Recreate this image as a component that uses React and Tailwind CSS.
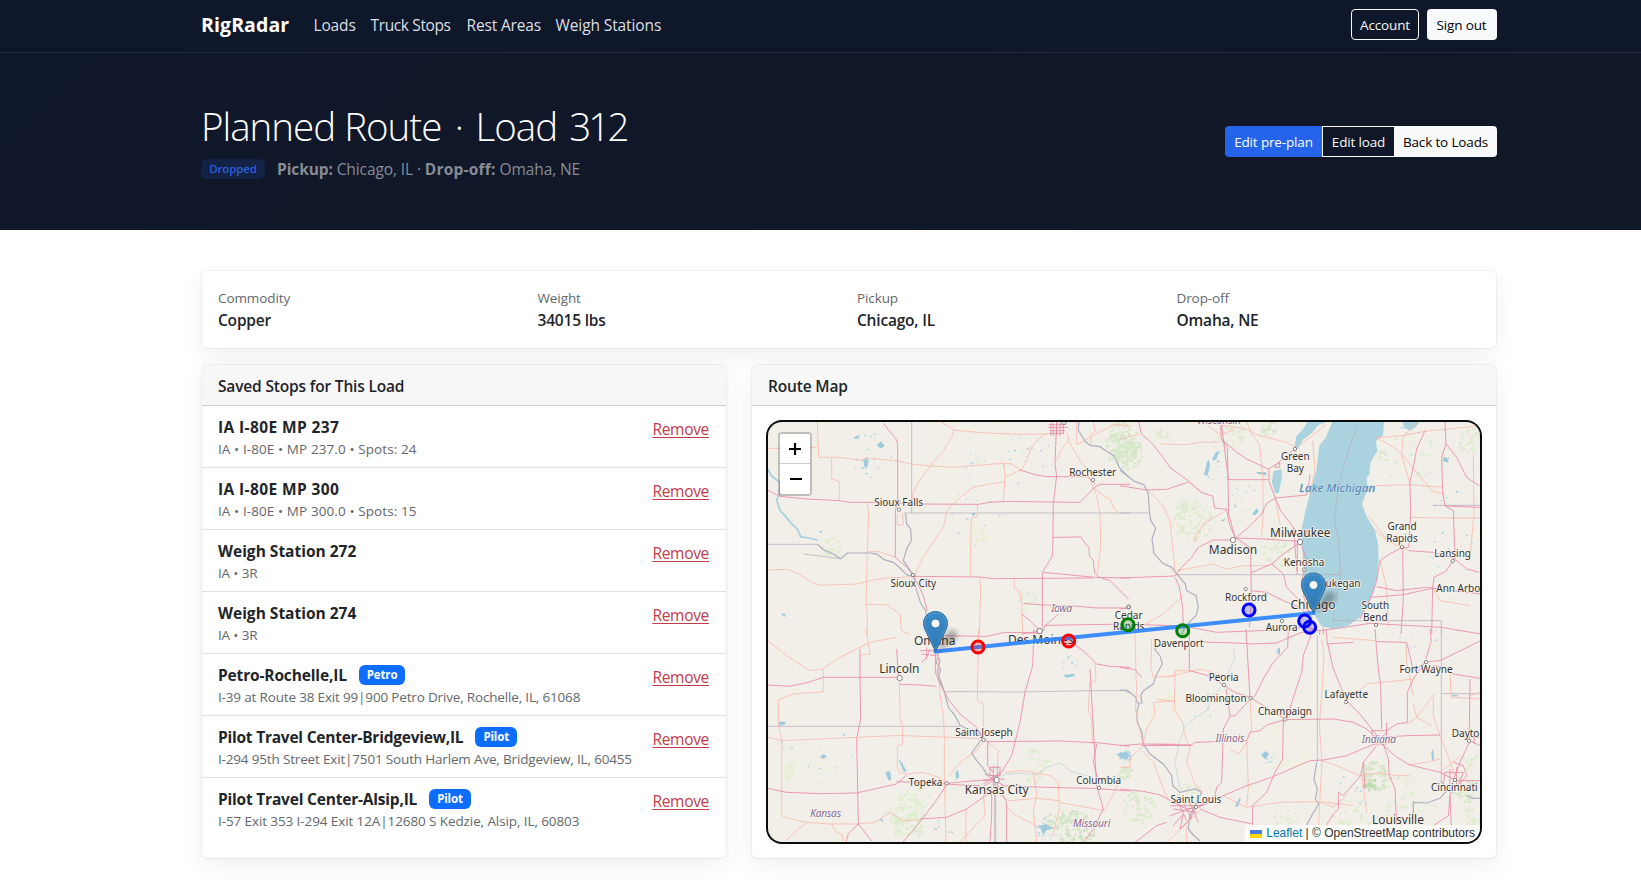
const navLinks = [
  { label: 'Loads', cls: 'w-[57px]' },
  { label: 'Truck Stops', cls: 'w-[96px] tracking-[-0.37px]' },
  { label: 'Rest Areas', cls: 'w-[89px]' },
  { label: 'Weigh Stations', cls: 'w-[120px] tracking-[-0.1px]' },
];

const facts = [
  ['Commodity', 'Copper'],
  ['Weight', '34015 lbs'],
  ['Pickup', 'Chicago, IL'],
  ['Drop-off', 'Omaha, NE'],
];

const stops = [
  { name: 'IA I-80E MP 237', detail: 'IA • I-80E • MP 237.0 • Spots: 24', nameCls: 'tracking-[0.4px]', detailCls: 'tracking-[0.1px]' },
  { name: 'IA I-80E MP 300', detail: 'IA • I-80E • MP 300.0 • Spots: 15', nameCls: 'tracking-[0.4px]', detailCls: 'tracking-[0.1px]' },
  { name: 'Weigh Station 272', detail: 'IA • 3R', nameCls: 'tracking-[0px]', detailCls: '' },
  { name: 'Weigh Station 274', detail: 'IA • 3R', nameCls: 'tracking-[0px]', detailCls: '' },
  { name: 'Petro-Rochelle,IL', tag: 'Petro', detail: 'I-39 at Route 38 Exit 99|900 Petro Drive, Rochelle, IL, 61068', nameCls: 'tracking-[-0.15px]', detailCls: 'tracking-[-0.17px]' },
  { name: 'Pilot Travel Center-Bridgeview,IL', tag: 'Pilot', detail: 'I-294 95th Street Exit|7501 South Harlem Ave, Bridgeview, IL, 60455', nameCls: 'tracking-[-0.23px]', detailCls: 'tracking-[-0.17px]' },
  { name: 'Pilot Travel Center-Alsip,IL', tag: 'Pilot', detail: 'I-57 Exit 353 I-294 Exit 12A|12680 S Kedzie, Alsip, IL, 60803', nameCls: 'tracking-[-0.2px]', detailCls: 'tracking-[-0.1px]' },
];

/* Each map sheet has its own origin; its units are thirds of a pixel. */
const sheets = [
  {
    origin: [760, 415],
    rivers: [
      'M24 165 L34 185 L48 196 L60 205 L58 240 L50 258 L60 290 L75 305 L95 330 L112 345 L122 368 L146 372 L172 378',
    ],
    lakes: ['M312 138l10 -8l4 12l-6 22l-8 -8z', 'M350 92l14 -10l10 14l-12 8z', 'M283 68l16 -4l-4 10l-12 0z', 'M62 598l12 2l4 8l-8 -2z', 'M175 355l12 -8l-3 10z', 'M633 299l12 -3l-3 12z'],
    grey: [
      'M956 24 L955 48 L975 82 L990 94 L1020 98 L1040 112 L1062 126 L1078 160 L1106 190',
      'M172 390 L190 407 L220 420 L242 434 L262 417 L330 417 L352 421 L372 437 L400 445 L420 462 L440 482 L460 488',
      'M436 297 L440 330 L452 345 L454 380 L440 405 L430 440 L444 460 L460 484 L470 530 L482 568 L497 590 L500 610',
    ],
    borders: ['M455 24 V297', 'M433 297 H1110', 'M24 391 H172', 'M130 420 L240 434'],
    roads: [
      'M370 28 L408 75 L413 90 V262 L406 290 V430 L440 460 L462 486 L490 545 L502 590',
      'M24 229 L60 247 L140 255 L238 260 L270 265 H395 L450 270 L655 271 L690 265 L740 262 L860 264 L960 265 L985 240 L1000 222 L1020 211 H1110',
      'M890 24 L885 150 L890 185 L880 270 L878 425 L847 475 V640',
      'M863 40 L925 40 M866 32 L918 32 M870 50 L915 50 M868 58 L912 58 M873 26 V66 M880 26 V66 M890 26 V66 M900 26 V66 M910 26 V60',
      'M780 168 L825 182 L860 188 H985 L1005 211',
      'M850 475 L1005 490 L1110 492', 'M460 487 L660 489 L700 494 L1000 492',
      'M878 370 L962 369 L975 388 L987 400 L988 425 L1000 440 L1004 478 L1018 490 L1050 500 L1075 525 L1106 556',
      'M790 568 L850 573 L930 575 L1010 582 L1100 582', 'M785 660 L850 650 L855 634 L1110 630',
      'M785 600 L810 620 L840 650', 'M850 640 L896 600',
    ],
    minor: [
      'M172 24 L176 130 H235 L300 138 L322 131 L335 134 L410 140 L455 150 L510 156 L590 160 L640 155 L730 148 L755 150 L785 170',
      'M24 103 H60 M150 101 H172', 'M215 132 V194 L238 202 V260',
      'M545 24 L583 48 L575 70 L550 110 L512 155 L475 205 L458 240 V268',
      'M578 48 L630 53 L700 58 L790 61 L865 60', 'M860 58 L835 75 L815 98 L800 140 L785 168 L735 190 L730 262',
      'M732 204 L690 210 L640 220 L600 250 L562 288 L550 340 L510 400 L490 430 L470 470 L466 487',
      'M323 268 L326 300 L322 420 L318 570 L322 600 V660', 'M24 468 L85 466 L120 482 L150 503 L180 514 L290 510 L340 498 L380 492 L460 488',
      'M318 571 L380 572 L420 600 L424 650 L450 662', 'M652 272 V308 L634 312 L632 410 V489', 'M660 492 L662 530 L658 660',
      'M763 492 V525 L778 530 L785 568 L786 600 L788 660', 'M325 413 L358 413 L406 430',
      'M920 58 L928 84 L960 140 L975 158 L985 188 L1010 245 L1020 300 L1022 400 L1012 480', 'M925 80 L905 105 L890 140',
      'M412 300 V334 L430 332 L428 296', 'M1000 220 L1030 245 L1050 255 L1062 285 L1078 296',
      'M1000 24 L1006 52 L992 60 L994 90', 'M1110 36 L1060 32 L950 92 V24', 'M725 140 L732 150 L735 190',
    ],
    greens: [[210, 400, 30, 30, '#e1ecc8'], [1075, 100, 48, 90, '#d4e6c6'], [640, 360, 40, 24, '#eaf0cf'], [540, 200, 75, 40, '#edf1d9'], [700, 90, 90, 30, '#edf1d9'], [800, 560, 30, 16, '#dcebca'], [1085, 55, 40, 45, '#d4e6c6']],
    ponds: [[330, 120, 70, 16], [800, 140, 80, 16], [660, 300, 100, 14], [620, 170, 60, 10]],
    towns: [[417, 287, 5], [999, 198, 5], [459, 483, 5], [839, 651, 8], [912, 24, 7], [1106, 579, 6]],
    labels: [['Sioux Falls', 416, 276], ['Rochester', 998, 185], ['Sioux City', 460, 519]],
    states: [['Iowa', 905, 593, 63]],
  },
  {
    origin: [1120, 415],
    water: [
      'M636 24 L792 24 L789 64 L768 82 L772 110 L752 145 L748 182 L740 190 L743 225 L726 270 L742 312 L765 348 L774 390 L776 440 L770 500 L752 556 L720 610 L684 635 L640 646 L604 636 L582 600 L572 570 L552 500 L547 400 L544 350 L552 310 L570 235 L590 165 L598 95 L618 70 Z',
      'M524 98 L528 68 L550 44 L562 24 L620 24 L596 32 L575 58 L548 78 L534 104 Z',
      'M460 172 L484 166 L486 190 L476 238 L464 236 L456 205 Z',
      'M850 24 L898 24 L888 38 L872 50 L852 42 Z',
    ],
    lakes: ['M252 182l8 -34l6 -12l4 16l-8 34z', 'M275 140l12 -25l12 -4l-10 24z', 'M396 300l16 -18l4 12l-12 10z', 'M970 128l12 4l4 14l-16 -4z', 'M408 174l30 0l2 10l-26 -4z', 'M302 320l16 -8l-6 10z'],
    rivers: [],
    grey: ['M0 168 L20 184 L45 203 L72 212 L85 240 L88 290 L92 320 L107 342 L96 375 L102 418 L128 448 L155 460 L172 482 L196 510 L200 530 L228 545 L235 580 L228 605 L210 622 L192 645 L185 662'],
    borders: ['M0 297 H85', 'M168 482 H662 L656 380 L644 318 L655 210 L690 95 L715 28', 'M662 484 L638 620 H964 V660', 'M938 274 H1082'],
    roads: [
      'M56 24 L65 60 L100 92 L125 125 L150 160 L185 186 L210 204 L245 236 L278 246 L284 282 L320 286 L328 330 L345 370 L392 402 L394 560 L388 640',
      'M302 34 L304 75 L322 100 L324 196 L326 300 L345 370', 'M323 197 L446 197', 'M0 215 L80 228 L140 226 L206 204',
      'M304 75 L350 115 L380 135 L445 165 L470 150 L524 105', 'M446 165 L448 205 L465 250 L482 290 L520 340 L540 380 L560 440 L545 500 L552 550 L570 600',
      'M346 372 L430 375 L540 382', 'M345 375 L385 340 L425 300 L440 268 L466 252 L560 243 L568 200 L570 180',
      'M345 378 L280 378 L235 400 L215 430 L185 460 L165 486 L0 492', 'M166 490 L178 520 L188 580 L190 640',
      'M394 476 L455 450 L490 420 L540 386', 'M455 450 L490 480 L500 520 L540 560 L570 600', 'M394 530 L440 535 L490 560 L540 580 L570 610',
      'M0 585 L30 582 M0 630 L190 636 L290 655 L420 650 L560 640 L600 650 L662 642 L750 628 L964 640 L1082 660',
      'M975 24 L978 90 L965 130 L968 235 L975 276 L1000 290 L1005 430 L980 470 L942 490 L938 522 L935 660',
      'M915 50 L890 105 L882 150 L870 205 L872 300 L866 400 L844 402 L812 418 L780 440 L770 500 L755 545 L720 615',
      'M866 410 L940 415 L1000 432 L1040 465 L1078 475', 'M978 90 L1010 130 L1040 190 L1078 215', 'M770 518 L830 530 L920 520 L1000 530 L1082 540',
      'M848 400 L850 560 L843 660', 'M975 276 L1078 280', 'M754 550 L850 542 L942 522', 'M600 650 L598 662 M610 640 V662',
      'M520 340 L532 480 M532 382 V470 M465 155 L480 145 L478 160 L465 160 Z', 'M325 196 L305 34',
    ],
    minor: [
      'M60 60 L0 75', 'M122 90 L200 92 L240 85 L302 84', 'M85 230 L128 275 L150 320 L158 400 L166 480', 'M245 235 L205 205',
      'M304 34 L380 45 L410 62 L500 85 L524 98', 'M380 24 L395 60 L418 90 L428 180 L430 290 L425 370', 'M530 100 L580 62 L620 30',
      'M570 240 L585 165 L578 80', 'M466 250 L480 330', 'M325 285 L250 330 L220 385', 'M172 470 L280 450 L320 465 L370 455 L450 455',
      'M736 230 L768 215 L870 212 L968 220', 'M765 348 L800 380 L866 410', 'M768 70 L820 100 L850 125 L890 175 L935 230 L975 240', 'M768 72 L845 65 L915 52 L1080 35',
      'M872 310 L975 312 H1082', 'M745 305 L780 350 L800 376 L830 380', 'M1060 120 L1062 300 L1050 430', 'M940 522 L960 560 L1050 575',
      'M870 210 L845 120 L850 70 L890 24', 'M780 440 L800 520 L805 640', 'M190 545 L130 600 L60 640', 'M250 24 L300 62 L340 48',
    ],
    greens: [[20, 120, 45, 75, '#d4e6c6'], [215, 320, 60, 90, '#dceacb'], [120, 60, 20, 18, '#dcebca'], [440, 40, 25, 24, '#d4e6c6'], [330, 60, 40, 28, '#dcebca'], [1050, 80, 40, 45, '#dceacb'], [460, 410, 50, 36, '#dcebca'], [775, 120, 30, 14, '#d9e8c6'], [880, 140, 90, 24, '#dcebca'], [170, 280, 25, 16, '#dcebca']],
    ponds: [[300, 150, 60, 14], [380, 260, 50, 12], [870, 40, 30, 14], [960, 200, 80, 10], [1000, 400, 80, 10]],
    towns: [[525, 105, 5], [339, 378, 8], [540, 384, 8], [552, 467, 5], [377, 525, 5], [846, 399, 5], [998, 441, 5], [486, 621, 5], [768, 633, 5], [26, 579, 5]],
    labels: [
      ['Green', 526, 139], ['Bay', 526, 174], ['Milwaukee', 541, 368, 36], ['Madison', 339, 419, 36], ['Kenosha', 552, 455], ['Waukegan', 647, 520], ['Rockford', 378, 560],
      ['Chicago', 579, 584, 36], ['Aurora', 485, 652], ['Grand', 846, 349], ['Rapids', 846, 384], ['Lansing', 998, 428], ['Ann Arbor', 1021, 534], ['South', 766, 585], ['Bend', 766, 620], ['Cedar', 26, 614], ['Rapids', 26, 648],
    ],
    states: [['Wisconsin', 297, 31, 132]],
    lakeLabel: ['Lake Michigan', 652, 235],
  },
  {
    origin: [760, 630],
    rivers: [],
    lakes: ['M376 430l14 -4l4 24l-8 6z', 'M55 278l20 0l2 8l-18 4z', 'M180 384l10 -8l10 4l-8 10z', 'M908 138l34 -4l2 8l-24 4z', 'M586 430l8 -8l4 22l-10 8z', 'M838 590l20 -4l22 12l-20 6l-10 14z', 'M1070 376l30 -8l8 12l-26 8z', 'M358 566l12 8l-4 6z', 'M414 388l10 10l16 28l-8 4z'],
    grey: [
      'M530 70 L540 95 L532 130 L545 165 L555 195 L565 235 L585 260 L600 288 L625 302 L655 305 L665 330 L635 372 L650 395 L668 415 L680 436 L710 444',
      'M536 80 L528 100 L542 120 L535 150 L548 172',
    ],
    faint: ['M710 444 L740 436 L780 432 L830 438 L860 415 L900 402 L935 428 L980 440'],
    borders: ['M24 292 H600', 'M555 188 H640 L780 189 L1000 185 H1095 L1108 192', 'M704 455 V640', 'M707 455 V640'],
    roads: [
      'M24 168 L90 172 L145 160 L190 145 H410', 'M420 166 L480 168 L530 172', 'M415 145 L410 60 M480 65 H530 M500 55 V90 M485 100 L500 85 L510 60',
      'M526 70 V130 L540 165 L565 210 L600 255 L650 295 L672 330 L683 338 L683 410 L700 430', 'M822 0 L818 110 L795 190 L780 280 L755 380 L725 430 L705 450',
      'M24 478 L80 490 L180 494 L290 492 L410 465 L440 438', 'M410 458 L550 464 L650 455 L705 450 L730 470 L860 475 L1000 478 L1110 486',
      'M558 470 L525 520 L470 590 L428 640', 'M560 465 L600 468 L660 470', 'M668 455 L735 450 M675 435 L730 470 M690 415 H720 V440 H690 Z M700 410 V475 M712 410 V475 M670 465 L720 430 M672 470 L700 455',
      'M695 470 V560 L690 638', 'M715 470 L740 520 L740 638', 'M300 60 V150 L302 270 L290 330 L295 585 L335 636', 'M295 585 L265 615 L258 638', 'M680 338 L800 337 L900 336 L1020 342 L1108 352',
      'M990 120 L1010 470 L1030 540 L1000 600 L975 636', 'M480 570 L560 565 L620 540 L690 490', 'M935 40 L975 70 L1010 105 L1050 112 L1110 115',
      'M1010 345 L1000 400 L1020 478', 'M485 75 L530 80 M530 20 L680 22 L735 10 L840 12',
    ],
    minor: [
      'M24 35 L80 80 L150 125 L190 120 L240 85 L330 40 L410 25', 'M190 120 V188 L100 195 L55 212 L55 290 L65 335 V560 L85 568 L140 580 L210 585 L295 585 L345 580 L390 550 L430 575 L480 572',
      'M318 0 L330 75 L300 78', 'M24 325 L65 335 L180 330 L290 325 L400 320 L425 320 L552 324 L672 330', 'M418 145 L420 270 L428 290 V345 L412 350 V415 L420 430 L440 435',
      'M535 70 L540 200 L550 260 L553 320 V440 L558 640', 'M656 0 L652 215 L670 225 V330', 'M568 440 L600 400 L650 365 L670 335', 'M685 340 L715 365 L712 420',
      'M440 435 L490 430 L535 445 L560 462', 'M735 430 L790 425 L870 440 L895 460 L898 540 L885 590 L878 620', 'M820 430 L830 500 L820 545 L830 638', 'M898 520 L1035 545 L1072 470',
      'M140 580 L110 605 L75 636', 'M215 585 L230 610 L248 618 V636', 'M618 540 V638', 'M670 490 L675 560 L600 638', 'M735 530 L770 560 L830 590', 'M1005 100 L1008 155 L990 160 L985 240 L995 270 L998 345', 'M720 500 L750 515 L830 508 L898 515',
    ],
    greens: [[460, 525, 50, 70, '#dbeecb'], [435, 590, 45, 50, '#d8edc9'], [940, 605, 60, 90, '#cde2be'], [880, 570, 35, 34, '#d4e6c6'], [90, 430, 25, 18, '#e1efcb'], [810, 410, 50, 26, '#dcebca'], [1090, 430, 20, 24, '#d4e6c4'], [190, 420, 60, 24, '#e6f0d2'], [400, 560, 30, 20, '#dcebca']],
    ponds: [[920, 95, 30, 8], [1090, 380, 20, 20], [860, 600, 34, 22], [210, 380, 80, 8], [550, 600, 40, 10], [75, 350, 20, 5]],
    towns: [[419, 147, 8], [671, 333, 5], [560, 463, 5], [710, 453, 8], [1017, 477, 5], [839, 6, 8]],
    labels: [['Omaha', 524, 49, 36], ['Des Moines', 842, 46, 36], ['Lincoln', 418, 132, 36], ['Saint Joseph', 672, 321], ['Topeka', 497, 472], ['Kansas City', 710, 495, 36], ['Columbia', 1016, 466]],
    states: [['Kansas', 197, 563, 93], ['Missouri', 995, 595, 112]],
  },
  {
    origin: [1120, 630],
    rivers: [],
    faint: ['M340 60 L345 90 L330 120 L310 160 L292 190', 'M285 190 L260 245 L225 268 L195 290 L178 340 L165 400 L180 480'],
    lakes: ['M345 530l14 -24l4 4l-10 24z', 'M0 370l28 2l-6 20l-22 -6z', 'M425 380l10 -14l12 8l-10 18z', 'M934 370l6 -10l2 30l-6 6z', 'M996 198l18 0l0 4l-18 0z', 'M472 60l8 -4l0 20l-8 0z'],
    grey: [
      'M108 46 L105 62 L120 80 L127 105 L108 140 L100 165 L70 185 L62 200 L66 222 L52 222 L48 205 L22 184 L0 183',
      'M58 222 L50 250 L52 280 L66 310 L70 345 L90 375 L130 405 L155 440 L158 470 L180 490 L225 480 L245 490 L232 515 L210 560 L205 600 L220 618 L240 636',
      'M590 400 L582 450 L592 480 L586 510 L596 525 L575 560 L560 588',
      'M880 560 V520 L920 522 L960 508 L980 485 L962 455', 'M1040 500 L1060 508 L1080 508',
    ],
    borders: ['M592 20 V400', 'M964 0 V455', 'M964 194 H1082'],
    roads: [
      'M0 115 L45 122 L65 145 M208 0 V125 L265 140 L312 168', 'M208 38 L345 42 L400 45 L470 42 L540 12 L590 0', 'M378 0 L390 205', 'M505 0 L503 55 L460 100 L430 150 L405 200 L390 212 L345 260 L330 262 L310 300 L305 460 L290 475 L285 500 L240 530',
      'M580 0 L550 80 L545 130 L525 190 L500 270', 'M312 170 L345 190 L390 205 L430 230 L495 270', 'M318 180 L330 260', 'M382 330 L390 310 L420 305 L440 288 L495 272 L640 270 L700 280 L740 300 L775 330',
      'M490 272 L488 390 L465 430 L440 490 L398 530 V640', 'M0 350 L65 345 L215 348 L225 340 L380 335', 'M65 350 L215 349',
      'M0 480 L70 487 L120 498 L160 520 L200 540 L235 535 L310 500 L380 470 L455 445 L500 425 L570 395 L610 393 L680 380 L775 340', 'M240 540 L300 565 L398 585', 'M228 535 L210 570 L180 600 L190 555 L160 590 M150 530 H240 M160 540 L230 550 M175 520 L200 575 M190 520 L215 570 M210 520 L235 580 M150 560 L250 525 M140 580 L110 590 L45 640',
      'M618 0 L622 40 L640 120 L680 215 L720 255 L755 300 L780 330', 'M765 0 L768 40 L775 120 L782 170 L785 300', 'M800 280 V310 L780 330 M755 305 H800 V345 H760 Z', 'M785 325 L860 320 L960 318', 'M800 305 L830 285 L862 280 V190 L880 150 L915 100',
      'M930 0 L934 35 L918 90 M918 100 L880 125 L860 40 L768 38', 'M920 98 L960 95 L1080 36', 'M938 110 L975 115 L1000 135 L1080 148', 'M785 345 L830 385 L870 408 L960 430 L1000 450', 'M770 350 L730 400 L722 440 L670 500 L655 490 L655 540 L640 555 L620 588', 'M790 345 L805 390 L808 440 L825 480 L830 588',
      'M1050 150 L1048 300 L1050 335 L1020 400 L1005 440 L990 500 L985 560 L940 590', 'M1050 335 L1080 350 M1055 325 L1078 325 M1062 310 V345', 'M975 430 H1030 L1015 470 H970 Z M990 420 V480 M1010 415 V470', 'M1005 455 L1082 455 M1000 400 L1030 410 L1040 440 L1020 465',
      'M990 500 L996 636', 'M620 45 L700 40', 'M730 400 L735 480',
    ],
    minor: [
      'M95 30 L93 120 L100 145 L163 140 L165 125 L208 125', 'M165 130 L163 240 L190 285 L192 310 L210 360 L200 400 L225 465 L245 490', 'M45 0 L48 140 L50 180 L46 240 L70 350', 'M70 350 L32 385 L30 415 L0 415',
      'M70 345 L80 300 L105 255 L100 220 L160 215 M163 345 L100 345', 'M66 365 L100 400 L130 480 L145 510', 'M605 30 L612 80 L605 200 L598 290 L606 400 L600 500 L596 588', 'M310 500 L380 535 L480 520 L600 518 L700 530', 'M380 335 L395 300 L390 200',
      'M380 330 L385 480 L380 530', 'M606 395 L650 410 L720 440 L780 432 L835 440 L870 440', 'M940 195 L940 260 L960 320 L980 370 L1005 440', 'M680 215 L740 165 L880 150', 'M865 408 L920 400 L960 390', 'M880 225 L890 265 L940 200 M890 265 L862 285 M890 265 L935 290', 'M725 440 L740 550',
      'M990 110 L993 205 L1080 210', 'M765 35 L640 25', 'M960 430 L1005 395 L1020 380', 'M330 360 L355 375 L385 335', 'M110 210 L163 218', 'M240 545 L140 640 M200 590 V640', 'M140 145 L240 120 L340 150', 'M600 520 L640 535 L680 500', 'M1050 200 L1080 190', 'M880 200 L860 100 L858 40',
    ],
    greens: [[490, 340, 85, 70, '#eef2d3'], [760, 440, 45, 65, '#d0e4c1'], [745, 465, 20, 24, '#b9d9ab'], [50, 530, 50, 70, '#d8e8c9'], [140, 225, 30, 14, '#e8efcf'], [200, 500, 40, 26, '#dcebca'], [860, 510, 80, 32, '#dcebca'], [1030, 480, 40, 26, '#d4e6c4'], [490, 575, 40, 18, '#dcebca'], [690, 560, 60, 30, '#dcebca'], [1050, 560, 30, 24, '#dcebca'], [1045, 400, 30, 14, '#dcebca']],
    ponds: [[15, 380, 18, 12], [440, 380, 22, 12], [690, 480, 50, 10], [880, 30, 80, 8], [230, 240, 60, 8]],
    towns: [[312, 168, 5], [392, 207, 5], [495, 272, 5], [678, 219, 5], [918, 99, 5], [1047, 336, 5], [1005, 453, 5], [228, 534, 5]],
    labels: [['Davenport', 176, 53], ['Peoria', 311, 156], ['Bloomington', 288, 218], ['Champaign', 495, 259], ['Lafayette', 679, 206], ['Fort Wayne', 918, 133], ['Dayton', 1046, 323], ['Cincinnati', 1003, 486], ['Saint Louis', 228, 522], ['Louisville', 834, 585, 36]],
    states: [['Illinois', 330, 339, 87], ['Indiana', 777, 341, 103]],
  },
];

const scatter = ([cx, cy, r, n], seed, size) => {
  let s = seed * 9301 + cx * 131 + cy * 17;
  const rnd = () => {
    s = (s * 16807 + 11) % 2147483647;
    return s / 2147483647;
  };
  let d = '';
  for (let i = 0; i < n; i += 1) {
    const a = rnd() * 6.283;
    const k = Math.sqrt(rnd()) * r;
    const w = size * (0.4 + rnd());
    const h = size * (0.3 + rnd() * 0.8);
    d += `M${(cx + Math.cos(a) * k).toFixed(0)} ${(cy + Math.sin(a) * k).toFixed(0)}l${w.toFixed(1)} ${(-h * 0.6).toFixed(1)}l${(w * 0.4).toFixed(1)} ${h.toFixed(1)}l${(-w).toFixed(1)} ${(h * 0.5).toFixed(1)}z`;
  }
  return d;
};

const at = ([x, y]) => `translate(${x} ${y}) scale(0.33333)`;

function Terrain({ sheet, seed }) {
  return (
    <g transform={at(sheet.origin)} fill="none">
      {sheet.greens.map((g, i) => <path key={i} d={scatter(g, seed + i, 8.5)} fill={g[4]} opacity="0.85" />)}
      {sheet.ponds.map((p, i) => <path key={i} d={scatter(p, seed + i + 40, 4.5)} fill="#a5cfdf" />)}
      {(sheet.water || []).map((d) => <path key={d} d={d} fill="#aad3df" />)}
      {sheet.lakes.map((d) => <path key={d} d={d} fill="#9dcbdd" />)}
      {(sheet.faint || []).map((d) => <path key={d} d={d} stroke="#cbdadd" strokeWidth="3" />)}
      {sheet.rivers.map((d) => <path key={d} d={d} stroke="#a3cfdf" strokeWidth="5" />)}
      {sheet.borders.map((d) => <path key={d} d={d} stroke="#b9adc0" strokeWidth="2.8" opacity="0.8" />)}
      {sheet.grey.map((d) => <path key={d} d={d} stroke="#adb0c2" strokeWidth="3.6" />)}
    </g>
  );
}

function Roads({ sheet }) {
  return (
    <g transform={at(sheet.origin)} fill="none" strokeLinejoin="round">
      {sheet.minor.map((d) => <path key={d} d={d} stroke="#fab9a9" strokeWidth="2.4" />)}
      {sheet.roads.map((d) => <path key={d} d={d} stroke="#e888a3" strokeWidth="2.5" />)}
    </g>
  );
}

function Labels({ sheet }) {
  const halo = { paintOrder: 'stroke', stroke: '#f7f4ef', strokeWidth: 5, strokeLinejoin: 'round' };
  return (
    <g transform={at(sheet.origin)} fontFamily="'Noto Sans', sans-serif" textAnchor="middle" letterSpacing="0">
      {sheet.towns.map(([x, y, r]) => <circle key={`${x}-${y}`} cx={x} cy={y} r={r} fill="#fff" stroke="#777" strokeWidth="2.6" />)}
      {sheet.states.map(([t, x, y, w]) => <text key={t} x={x} y={y} fontSize="31" fontStyle="italic" fill="#86698f" textLength={w} style={halo}>{t}</text>)}
      {sheet.labels.map(([t, x, y, s = 30]) => <text key={t + y} x={x} y={y} fontSize={s} fill="#333" style={halo}>{t}</text>)}
      {sheet.lakeLabel && <text x={sheet.lakeLabel[1]} y={sheet.lakeLabel[2]} fontSize="35" fontStyle="italic" fill="#5280b3" textLength="228" style={{ ...halo, stroke: '#c5e0e8', strokeWidth: 3 }}>{sheet.lakeLabel[0]}</text>}
    </g>
  );
}

function Pin({ x, y }) {
  return (
    <g transform={`translate(${x} ${y})`}>
      <path d="M13 41 L22 24 C26 16 37 18 34 26 C31 33 22 36 13 41Z" fill="#000" opacity="0.28" filter="url(#soft)" />
      <path d="M12.5 0.5 C5.8 0.5 0.5 5.8 0.5 12.4 C0.5 15.3 1.5 18 2.9 20.6 L12.5 40.5 L22.1 20.6 C23.5 18 24.5 15.3 24.5 12.4 C24.5 5.8 19.2 0.5 12.5 0.5Z" fill="url(#pin)" stroke="#2e6c97" strokeWidth="1" />
      <path d="M12.5 1.6 C6.4 1.6 1.6 6.4 1.6 12.4 C1.6 15.1 2.5 17.6 3.9 20.1 L12.5 38 L21.1 20.1 C22.5 17.6 23.4 15.1 23.4 12.4 C23.4 6.4 18.6 1.6 12.5 1.6Z" fill="none" stroke="#fff" strokeOpacity="0.15" />
      <circle cx="12.5" cy="12.5" r="4.3" fill="#fff" stroke="#2e6c97" strokeWidth="0.6" />
    </g>
  );
}

const spots = [
  [978, 648, 'red'], [1068.7, 642, 'red'], [1128, 625.7, 'green'], [1182.7, 631.7, 'green'],
  [1249, 611, 'blue'], [1304.7, 622, 'blue'], [1309.7, 628.3, 'blue'],
];

function RouteMap() {
  return (
    <div className="relative h-[420px] overflow-hidden rounded-[14px] bg-[#f2efe9] shadow-[0_0_0_2px_#0b0d0c]">
      <svg viewBox="768 423 712 420" className="block h-[420px] w-[712px]">
        <defs>
          <linearGradient id="pin" x1="0" y1="0" x2="0" y2="1"><stop offset="0" stopColor="#3b8bca" /><stop offset="1" stopColor="#2b77b1" /></linearGradient>
          <filter id="soft" x="-40%" y="-40%" width="180%" height="180%"><feGaussianBlur stdDeviation="2.4" /></filter>
        </defs>
        {sheets.map((s, i) => <Terrain key={i} sheet={s} seed={i + 1} />)}
        {sheets.map((s, i) => <Roads key={i} sheet={s} />)}
        {sheets.map((s, i) => <Labels key={i} sheet={s} />)}
        <path d="M935.5 652.5 L1313.5 614" stroke="#3388ff" strokeWidth="4" strokeLinecap="round" opacity="0.95" />
        {spots.map(([x, y, c]) => <circle key={x} cx={x} cy={y} r="6" fill={c} fillOpacity="0.2" stroke={c} strokeWidth="3" />)}
        <Pin x={923} y={612} />
        <Pin x={1301} y={573.5} />
      </svg>
      <div className="absolute left-[10px] top-[10px] flex w-[34px] flex-col rounded-[4px] border-2 border-black/20 bg-clip-padding">
        <button aria-label="Zoom in" className="flex h-[30px] items-center justify-center rounded-t-[2px] border-b border-[#ccc] bg-white pt-px">
          <svg viewBox="0 0 14 14" className="size-[14px]"><path d="M7 1v12M1 7h12" stroke="#000" strokeWidth="2.2" /></svg>
        </button>
        <button aria-label="Zoom out" className="flex h-[30px] items-center justify-center rounded-b-[2px] bg-white pl-px">
          <svg viewBox="0 0 14 14" className="size-[14px]"><path d="M1 7h12" stroke="#000" strokeWidth="2.2" /></svg>
        </button>
      </div>
      <div className="absolute bottom-0 right-0 flex h-[17px] items-center whitespace-pre bg-white/80 px-[5px] font-['Liberation_Sans',sans-serif] text-[12px] leading-[17px] tracking-normal text-[#333]">
        <svg viewBox="0 0 12 8" className="mr-[4px] h-[8px] w-[12px]"><path fill="#4C7BE1" d="M0 0h12v4H0z" /><path fill="#FFD500" d="M0 4h12v4H0z" /></svg>
        <span className="text-[#0078a8]">Leaflet</span> | © OpenStreetMap contributors
      </div>
    </div>
  );
}

const card = 'rounded-[6px] border border-black/[0.05] bg-white bg-clip-padding shadow-[0_8px_24px_rgba(0,0,0,0.06)]';
const cardTitle = 'h-[41px] rounded-t-[5px] border-b border-black/[0.175] bg-[#f7f7f8] px-4 pt-[9px] font-semibold tracking-[-0.17px]';

export default function App() {
  return (
    <div className="min-h-[894px] w-[1641px] overflow-hidden bg-white font-['Open_Sans','Noto_Sans',sans-serif] text-[15.5px] leading-6 tracking-[-0.15px] text-[#212529]">
      <nav className="h-[53px] border-b border-white/[0.08] bg-[#0f172a] pl-[201px] pr-[144px]">
        <div className="flex h-[49px] items-center">
          <span className="w-[112.5px] text-[19.5px] font-bold tracking-[0.1px] text-white">RigRadar</span>
          {navLinks.map((l) => <a key={l.label} className={`whitespace-nowrap text-[#dddfe3] ${l.cls}`}>{l.label}</a>)}
          <div className="ml-auto flex gap-2 text-[13.5px]">
            <button className="h-[31px] w-[68px] rounded-[4px] border border-[#f8f9fa] text-[#f8f9fa]">Account</button>
            <button className="h-[31px] w-[70px] rounded-[4px] bg-[#f8f9fa] pr-px text-black">Sign out</button>
          </div>
        </div>
      </nav>

      <header className="flex h-[177px] items-center justify-between bg-linear-[135deg] from-[#0f172a] to-[#111827] pl-[201px] pr-[144px]">
        <div className="pb-px">
          <h1 className="flex h-[48px] whitespace-nowrap text-[38.5px] font-light leading-[48px] tracking-[-1px] text-white">
            <span className="whitespace-pre">Planned Route </span>
            <span className="ml-[4.5px] whitespace-pre">· </span>
            <span className="ml-[3.5px] whitespace-pre">Load </span>
            <span className="ml-[3px] tracking-[-2.8px]">312</span>
          </h1>
          <div className="mt-[7px] flex h-[24px] items-center">
            <span className="mr-[12px] flex h-[20px] w-[64px] items-center justify-center rounded-[6px] bg-[#2563eb]/15 text-[11.5px] font-semibold text-[#2c5fdd]">Dropped</span>
            <p className="whitespace-pre tracking-[-0.1px] text-[#878c95]"><b>Pickup:</b> Chicago, IL · <b className="tracking-[0.2px]">Drop-off:</b> Omaha, NE</p>
          </div>
        </div>
        <div className="flex h-[31px] whitespace-nowrap text-[13.5px]">
          <button className="w-[97px] rounded-l-[4px] bg-[#2563eb] text-white">Edit pre-plan</button>
          <button className="w-[72px] border border-r-0 border-[#f8f9fa] bg-[#0f172a]/60 text-[#f8f9fa]">Edit load</button>
          <button className="w-[103px] rounded-r-[4px] bg-[#f8f9fa] text-black">Back to Loads</button>
        </div>
      </header>

      <main className="pl-[201px] pr-[144px] pt-[40px]">
        <section className={`mb-[15px] grid h-[79px] grid-cols-4 gap-4 p-4 ${card}`}>
          {facts.map(([k, v]) => (
            <div key={k}>
              <div className="pt-px text-[13.5px] leading-[20px] tracking-[-0.1px] text-[#63686d]">{k}</div>
              <div className="font-semibold tracking-[-0.2px]">{v}</div>
            </div>
          ))}
        </section>

        <div className="flex gap-6">
          <section className={`h-[495px] w-[526px] ${card}`}>
            <h2 className={cardTitle}>Saved Stops for This Load</h2>
            <ul>
              {stops.map((s) => (
                <li key={s.name} className="flex h-[62px] justify-between border-b border-[#dee2e6] pl-4 pr-[17px] pt-[9px] last:border-b-0">
                  <div className="whitespace-nowrap">
                    <div className="flex h-[24px] items-center">
                      <span className={`font-bold ${s.nameCls}`}>{s.name}</span>
                      {s.tag && <span className="ml-[12px] flex h-[20px] items-center rounded-[6px] bg-[#0d6efd] px-[8px] text-[11.5px] font-bold text-white">{s.tag}</span>}
                    </div>
                    <div className={`text-[13.5px] leading-[21px] text-[#63686d] ${s.detailCls}`}>{s.detail}</div>
                  </div>
                  <a className="mt-[2px] h-6 text-[#c23b4b] underline decoration-1 underline-offset-2 tracking-[-0.3px]">Remove</a>
                </li>
              ))}
            </ul>
          </section>

          <section className={`h-[495px] w-[746px] ${card}`}>
            <h2 className={cardTitle}>Route Map</h2>
            <div className="p-4">
              <RouteMap />
            </div>
          </section>
        </div>
      </main>
    </div>
  );
}
